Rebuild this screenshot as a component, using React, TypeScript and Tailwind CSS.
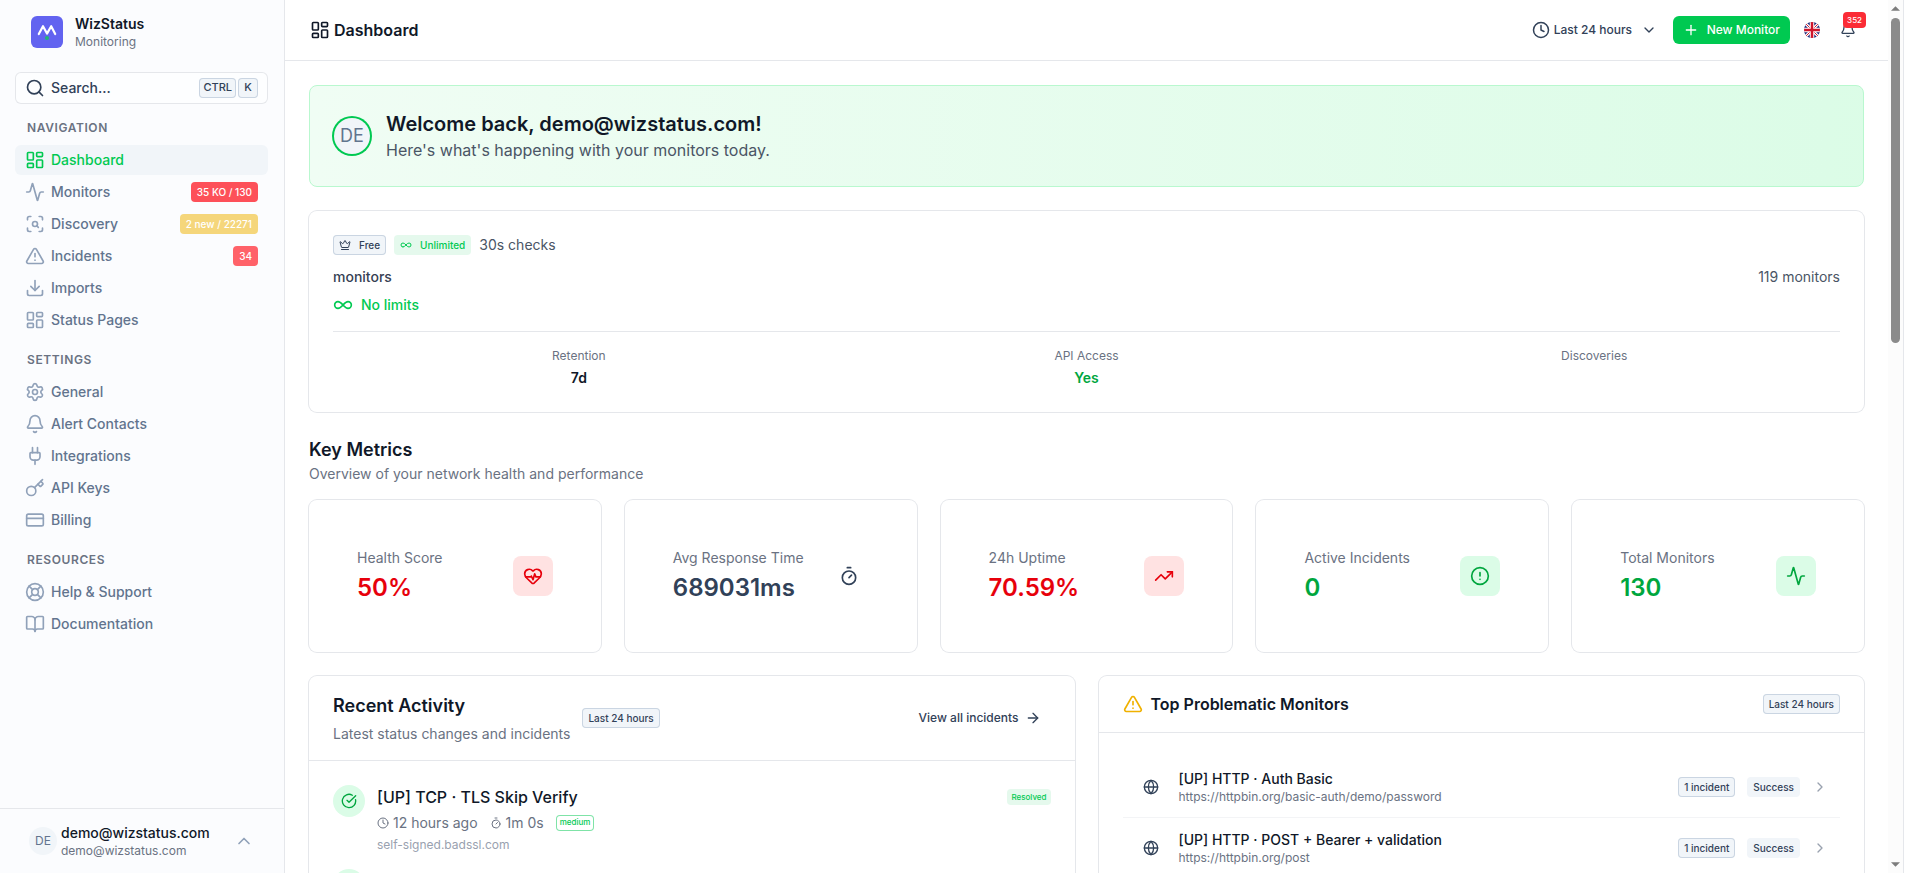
import type { ReactNode } from 'react'
import {
  Activity, ArrowRight, Bell, BookOpen, ChevronDown, ChevronRight, ChevronUp, CircleAlert, CircleCheckBig,
  Clock, CreditCard, Crown, Download, Globe, HeartPulse, Infinity as InfinityIcon, Key, LayoutDashboard,
  LifeBuoy, Plug, Plus, ScanSearch, Search, Settings, Timer, TrendingUp, TriangleAlert,
} from 'lucide-react'
import type { LucideIcon } from 'lucide-react'
import clsx from 'clsx'

type NavItem = { label: string; icon: LucideIcon; active?: boolean; badge?: string; badgeClass?: string }

const NAV: { title: string; items: NavItem[] }[] = [
  {
    title: 'Navigation',
    items: [
      { label: 'Dashboard', icon: LayoutDashboard, active: true },
      { label: 'Monitors', icon: Activity, badge: '35 KO / 130', badgeClass: 'bg-[#fd5059]' },
      { label: 'Discovery', icon: ScanSearch, badge: '2 new / 22271', badgeClass: 'bg-[#f5d67b]' },
      { label: 'Incidents', icon: TriangleAlert, badge: '34', badgeClass: 'bg-[#ff6269]' },
      { label: 'Imports', icon: Download },
      { label: 'Status Pages', icon: LayoutDashboard },
    ],
  },
  {
    title: 'Settings',
    items: [
      { label: 'General', icon: Settings },
      { label: 'Alert Contacts', icon: Bell },
      { label: 'Integrations', icon: Plug },
      { label: 'API Keys', icon: Key },
      { label: 'Billing', icon: CreditCard },
    ],
  },
  {
    title: 'Resources',
    items: [
      { label: 'Help & Support', icon: LifeBuoy },
      { label: 'Documentation', icon: BookOpen },
    ],
  },
]

const METRICS = [
  { label: 'Health Score', value: '50%', icon: HeartPulse, text: 'text-red-600', box: 'bg-red-100 text-red-600' },
  { label: 'Avg Response Time', value: '689031ms', icon: Timer, text: 'text-slate-700', box: 'text-slate-700' },
  { label: '24h Uptime', value: '70.59%', icon: TrendingUp, text: 'text-red-600', box: 'bg-red-100 text-red-600' },
  { label: 'Active Incidents', value: '0', icon: CircleAlert, text: 'text-green-600', box: 'bg-green-100 text-green-600' },
  { label: 'Total Monitors', value: '130', icon: Activity, text: 'text-green-600', box: 'bg-green-100 text-green-600' },
]

const PLAN = [
  { label: 'Retention', value: '7d', color: 'text-gray-900' },
  { label: 'API Access', value: 'Yes', color: 'text-green-600' },
  { label: 'Discoveries', value: '', color: 'text-gray-900' },
]

const PROBLEMS = [
  { name: '[UP] HTTP · Auth Basic', url: 'https://httpbin.org/basic-auth/demo/password' },
  { name: '[UP] HTTP · POST + Bearer + validation', url: 'https://httpbin.org/post' },
]

const BADGE = 'inline-flex h-5 items-center rounded-sm px-1.5 text-[10px] font-medium whitespace-nowrap'

function Badge({ className, children }: { className?: string; children: ReactNode }) {
  return <span className={clsx(BADGE, className)}>{children}</span>
}

function OutlineBadge({ children }: { children: ReactNode }) {
  return <Badge className="bg-slate-100 text-slate-700 ring ring-inset ring-slate-300">{children}</Badge>
}

function Card({ className, children }: { className?: string; children: ReactNode }) {
  return <section className={clsx('rounded-lg bg-white ring ring-gray-200', className)}>{children}</section>
}

function Logo() {
  return (
    <svg viewBox="0 0 32 32" className="size-8" aria-hidden="true">
      <rect width="32" height="32" rx="6" fill="#6263f0" />
      <path d="M7.8 18 12 10.2l4 7.4 4.2-7.4L24.2 18" fill="none" stroke="#fff" strokeWidth="2.2" strokeLinecap="round" strokeLinejoin="round" />
      <circle cx="16" cy="22" r="2" fill="#22b573" />
    </svg>
  )
}

function FlagGB() {
  return (
    <svg viewBox="0 0 32 32" className="size-4 rounded-full" aria-hidden="true">
      <rect width="32" height="32" fill="#1f2a7a" />
      <path d="M0 0l32 32M32 0L0 32" stroke="#fff" strokeWidth="6" />
      <path d="M0 0l32 32M32 0L0 32" stroke="#cf142b" strokeWidth="2" />
      <path d="M16 0v32M0 16h32" stroke="#fff" strokeWidth="9" />
      <path d="M16 0v32M0 16h32" stroke="#cf142b" strokeWidth="5" />
    </svg>
  )
}

function Kbd({ children }: { children: ReactNode }) {
  return (
    <kbd className="inline-flex h-5 min-w-5 items-center justify-center rounded-sm bg-slate-100 px-1 font-['Inter',sans-serif] text-[11px] font-medium text-slate-700 ring ring-inset ring-slate-300">
      {children}
    </kbd>
  )
}

function Sidebar() {
  return (
    <aside className="flex w-[285px] shrink-0 flex-col border-r border-gray-200 bg-[#fbfcfe]">
      <div className="flex h-16 items-center gap-3 pl-[31px]">
        <Logo />
        <div>
          <div className="text-sm leading-5 font-semibold text-gray-900">WizStatus</div>
          <div className="text-xs leading-4 text-gray-500">Monitoring</div>
        </div>
      </div>

      <div className="flex-1 pt-2 pr-4 pl-[15px]">
        <button className="flex h-8 w-full items-center gap-1.5 rounded-md bg-white/50 px-2.5 text-sm font-medium text-slate-700 ring ring-inset ring-gray-200">
          <Search className="size-5" />
          <span>Search...</span>
          <span className="ml-auto flex gap-0.5">
            <Kbd>CTRL</Kbd>
            <Kbd>K</Kbd>
          </span>
        </button>

        {NAV.map(group => (
          <nav key={group.title} className="mt-2" aria-label={group.title}>
            <h3 className="px-3 text-xs leading-8 font-semibold tracking-wider text-gray-500 uppercase">{group.title}</h3>
            <div className="flex flex-col gap-0.5 py-px">
              {group.items.map(({ label, icon: Icon, active, badge, badgeClass }) => (
                <a
                  key={label}
                  href="#"
                  className={clsx(
                    'flex h-[30px] items-center gap-1.5 rounded-md px-2.5 text-sm font-medium',
                    active ? 'bg-slate-100 text-green-500' : 'text-slate-500'
                  )}
                >
                  <Icon className={clsx('size-5', !active && 'text-slate-400')} />
                  <span>{label}</span>
                  {badge && <Badge className={clsx('ml-auto text-white', badgeClass)}>{badge}</Badge>}
                </a>
              ))}
            </div>
          </nav>
        ))}
      </div>

      <button className="flex h-[65px] items-center gap-1 border-t border-gray-200 pr-[30px] pl-[29px] text-left">
        <span className="flex size-7 items-center justify-center rounded-full bg-slate-100 text-xs text-slate-500">DE</span>
        <span>
          <span className="block text-sm leading-5 font-medium text-gray-900">demo@wizstatus.com</span>
          <span className="block text-xs leading-4 text-gray-500">demo@wizstatus.com</span>
        </span>
        <ChevronUp className="ml-auto size-5 text-slate-400" />
      </button>
    </aside>
  )
}

function Header() {
  return (
    <header className="flex h-[61px] items-center border-b border-gray-200 px-6">
      <h1 className="flex items-center gap-1 pl-px font-semibold text-gray-900">
        <LayoutDashboard className="size-5" />
        Dashboard
      </h1>
      <div className="ml-auto flex items-center gap-1.5">
        <label className="flex items-center gap-1 px-2.5 text-slate-700">
          <Clock className="size-4.5" />
          <select aria-label="Period" className="appearance-none bg-transparent text-xs font-medium">
            <option>Last 24 hours</option>
          </select>
          <ChevronDown className="ml-1 size-4" />
        </label>
        <button className="flex h-7 items-center gap-2 rounded-md bg-green-500 px-2.5 text-xs font-medium text-white">
          <Plus className="size-4" />
          New Monitor
        </button>
        <div className="flex gap-1">
          <button className="flex size-8 items-center justify-center" aria-label="Language">
            <FlagGB />
          </button>
          <button className="relative flex size-8 items-center justify-center text-slate-700" aria-label="Notifications">
            <Bell className="size-4" />
            <span className="absolute -top-0.5 -right-0.5 flex h-4 items-center rounded-sm bg-red-500 px-1 text-[8px] font-medium text-white">352</span>
          </button>
        </div>
      </div>
    </header>
  )
}

function PlanCard() {
  return (
    <Card className="p-6">
      <div className="flex items-center gap-2">
        <Badge className="gap-2 bg-slate-100 text-slate-700 ring ring-inset ring-slate-300">
          <Crown className="size-3" />
          Free
        </Badge>
        <Badge className="gap-2 bg-green-500/10 text-green-500">
          <InfinityIcon className="size-3" />
          Unlimited
        </Badge>
        <span className="text-sm leading-5 text-gray-600">30s checks</span>
      </div>
      <div className="mt-3 flex justify-between text-sm">
        <span className="font-medium text-gray-700">monitors</span>
        <span className="text-gray-600">119 monitors</span>
      </div>
      <div className="mt-2 flex items-center gap-2 text-sm font-medium text-green-500">
        <InfinityIcon className="size-5" />
        No limits
      </div>
      <div className="mt-4 grid grid-cols-3 gap-4 border-t border-gray-200 pt-4 text-center">
        {PLAN.map(p => (
          <div key={p.label}>
            <div className="text-xs text-gray-500">{p.label}</div>
            <div className={clsx('mt-1 text-sm font-semibold', p.color)}>{p.value}</div>
          </div>
        ))}
      </div>
    </Card>
  )
}

function ActivityIcon() {
  return (
    <span className="flex size-8 shrink-0 items-center justify-center rounded-full bg-green-100 text-green-600">
      <CircleCheckBig className="size-4" />
    </span>
  )
}

function RecentActivity() {
  return (
    <Card>
      <div className="flex items-center justify-between border-b border-gray-200 px-6 py-4">
        <div className="flex items-center gap-3">
          <div>
            <h2 className="text-lg font-semibold text-gray-900">Recent Activity</h2>
            <p className="mt-1 text-sm text-gray-500">Latest status changes and incidents</p>
          </div>
          <OutlineBadge>Last 24 hours</OutlineBadge>
        </div>
        <a href="#" className="flex items-center gap-1.5 px-2.5 text-xs font-medium text-slate-700">
          View all incidents
          <ArrowRight className="size-4" />
        </a>
      </div>
      <div className="space-y-4 p-6">
        <div className="flex gap-3">
          <ActivityIcon />
          <div className="flex-1">
            <div className="flex items-center justify-between">
              <h3 className="font-medium text-gray-900">[UP] TCP · TLS Skip Verify</h3>
              <span className="flex h-4 items-center rounded-sm bg-green-500/10 px-1 text-[8px] font-medium text-green-500">Resolved</span>
            </div>
            <div className="mt-1 flex items-center gap-3 text-sm text-gray-500">
              <span className="flex items-center gap-1"><Clock className="size-3" />12 hours ago</span>
              <span className="flex items-center gap-1"><Timer className="size-3" />1m 0s</span>
              <span className="flex h-4 items-center rounded-sm px-1 text-[8px] font-medium text-green-500 ring ring-inset ring-green-500/50">medium</span>
            </div>
            <p className="mt-1 text-xs text-gray-400">self-signed.badssl.com</p>
          </div>
        </div>
        <ActivityIcon />
      </div>
    </Card>
  )
}

function ProblematicMonitors() {
  return (
    <Card>
      <div className="flex items-center justify-between border-b border-gray-200 px-6 py-4">
        <h2 className="flex items-center gap-2 font-semibold text-gray-900">
          <TriangleAlert className="size-5 text-yellow-500" />
          Top Problematic Monitors
        </h2>
        <OutlineBadge>Last 24 hours</OutlineBadge>
      </div>
      <div className="divide-y divide-gray-100 p-6">
        {PROBLEMS.map(m => (
          <a key={m.name} href="#" className="flex items-center gap-3 p-3">
            <span className="flex size-8 items-center justify-center text-slate-700">
              <Globe className="size-4" />
            </span>
            <span className="flex-1">
              <span className="block text-sm font-medium text-gray-900">{m.name}</span>
              <span className="block text-xs text-gray-500">{m.url}</span>
            </span>
            <OutlineBadge>1 incident</OutlineBadge>
            <Badge className="bg-slate-100 text-slate-700">Success</Badge>
            <ChevronRight className="size-4 text-gray-400" />
          </a>
        ))}
      </div>
    </Card>
  )
}

function ScrollRail() {
  return (
    <div className="flex w-4 shrink-0 flex-col items-center justify-between border-r border-gray-200 bg-[#fcfcfc] py-1.5" aria-hidden="true">
      <div className="flex h-full flex-col items-center gap-[7px]">
        <svg viewBox="0 0 10 5" className="h-[5px] w-[9px]" fill="#7d7d7d"><path d="M5 0l5 5H0z" /></svg>
        <div className="h-[38%] w-[9px] rounded-full bg-[#8b8b8b]" />
      </div>
      <svg viewBox="0 0 10 5" className="h-[5px] w-[9px] shrink-0" fill="#7d7d7d"><path d="M0 0h10L5 5z" /></svg>
    </div>
  )
}

export default function App() {
  return (
    <div className="flex h-screen overflow-hidden bg-white pr-3.5 font-['Inter',sans-serif] text-gray-900">
      <Sidebar />

      <div className="min-w-0 flex-1">
        <Header />
        <main className="space-y-6 p-6">
          {/* Welcome */}
          <section className="flex items-center gap-4 rounded-lg border border-green-200 bg-linear-to-r from-green-50 to-green-100 p-6">
            <span className="flex size-9 items-center justify-center rounded-full bg-slate-100 text-lg text-slate-500 ring-2 ring-green-500">DE</span>
            <div>
              <h2 className="text-xl leading-7 font-semibold text-gray-900">Welcome back, demo@wizstatus.com!</h2>
              <p className="text-gray-600">Here's what's happening with your monitors today.</p>
            </div>
          </section>

          <PlanCard />

          {/* Key metrics */}
          <section>
            <h2 className="text-lg font-semibold text-gray-900">Key Metrics</h2>
            <p className="text-sm text-gray-500">Overview of your network health and performance</p>
            <div className="mt-4 grid grid-cols-5 gap-6">
              {METRICS.map(({ label, value, icon: Icon, text, box }) => (
                <Card key={label} className="flex items-center justify-between p-12">
                  <div>
                    <p className="text-sm whitespace-nowrap text-gray-500">{label}</p>
                    <p className={clsx('mt-1 text-2xl font-semibold', text)}>{value}</p>
                  </div>
                  <span className={clsx('flex size-10 items-center justify-center rounded-lg', box)}>
                    <Icon className="size-5" />
                  </span>
                </Card>
              ))}
            </div>
          </section>

          <div className="grid grid-cols-2 gap-6">
            <RecentActivity />
            <ProblematicMonitors />
          </div>
        </main>
      </div>

      <ScrollRail />
    </div>
  )
}
